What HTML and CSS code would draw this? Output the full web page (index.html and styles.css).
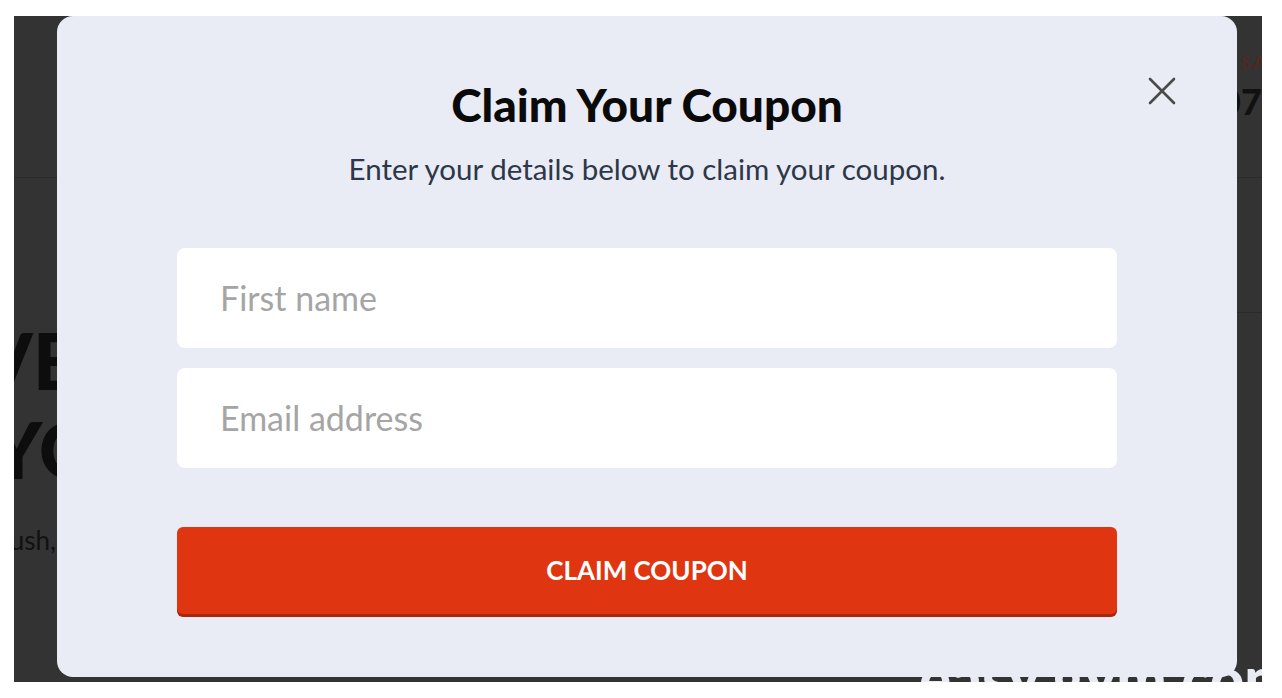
FILE: index.html
```html
<!DOCTYPE html>
<html lang="en">
<head>
    <meta charset="UTF-8">
    <meta name="viewport" content="width=device-width, initial-scale=1.0">
    <title>Claim Your Coupon</title>
    <link rel="stylesheet" href="styles.css">
</head>
<body>
    <div class="stage">
        <div class="site">
            <header class="site-header">
                <div class="contact">
                    <span class="contact-label">SALES</span>
                    <span class="contact-number">0700 123 456</span>
                </div>
            </header>
            <div class="site-body">
                <section class="hero">
                    <div class="hero-line">SAVE</div>
                    <div class="hero-line">ON YOUR</div>
                    <p class="hero-text">Plush, soft and made to last.</p>
                </section>
                <aside class="side-card"></aside>
            </div>
            <div class="site-footer">easy gym.com</div>
        </div>

        <div class="modal">
            <button class="modal-close" type="button" aria-label="Close">
                <svg width="32" height="32" viewBox="0 0 32 32">
                    <path d="M4 4 L28 28 M28 4 L4 28" stroke="#4a4a4a" stroke-width="2.6" stroke-linecap="round" fill="none"/>
                </svg>
            </button>
            <h1>Claim Your Coupon</h1>
            <p class="modal-sub">Enter your details below to claim your coupon.</p>
            <form class="coupon-form">
                <input type="text" placeholder="First name">
                <input type="email" placeholder="Email address">
                <button type="submit">CLAIM COUPON</button>
            </form>
        </div>
    </div>
</body>
</html>
```

FILE: styles.css
```css
body {
    margin: 0;
    padding: 16px 20px 16px 14px;
    background-color: #fff;
    font-family: Lato, "Open Sans", sans-serif;
}

.stage {
    position: relative;
    height: 666px;
    background-color: #333;
    overflow: hidden;
}

/* page behind the overlay */
.site {
    display: flex;
    flex-direction: column;
    height: 100%;
}

.site-header {
    display: flex;
    justify-content: flex-end;
    height: 161px;
    border-bottom: 1px solid #2b2b2b;
}

.contact {
    display: flex;
    flex-direction: column;
    align-items: flex-start;
    margin-right: -184px;
    padding-top: 36px;
    white-space: nowrap;
}

.contact-label {
    margin-left: 26px;
    font-size: 17px;
    letter-spacing: 3px;
    color: #5b2419;
}

.contact-number {
    margin: 6px 0 0 5px;
    font-size: 36px;
    font-weight: 900;
    color: #111;
}

.site-body {
    display: flex;
    flex: 1;
}

.hero {
    margin-left: -128px;
    padding-top: 138px;
    width: 600px;
}

.hero-line {
    font-size: 78px;
    font-weight: 900;
    line-height: 89px;
    color: #0d0d0d;
    white-space: nowrap;
}

.hero-line + .hero-line {
    margin-left: -34px;
}

.hero-text {
    margin: 30px 0 0 102px;
    font-size: 26px;
    color: #111;
    white-space: nowrap;
}

.side-card {
    flex: 1;
    margin-top: 134px;
    border-top: 1px solid #2b2b2b;
}

.site-footer {
    margin: -40px 0 0 905px;
    font-size: 60px;
    font-weight: 900;
    color: #e8ebf3;
    white-space: nowrap;
    height: 40px;
}

/* modal */
.modal {
    position: absolute;
    left: 43px;
    top: 0;
    width: 1180px;
    height: 661px;
    box-sizing: border-box;
    padding: 61px 120px 0;
    background-color: #e9ecf5;
    border-radius: 16px;
    text-align: center;
}

.modal-close {
    position: absolute;
    top: 59px;
    right: 59px;
    width: 32px;
    height: 32px;
    padding: 0;
    border: none;
    background: none;
    cursor: pointer;
}

.modal-close svg {
    display: block;
}

.modal h1 {
    margin: 0;
    font-size: 46px;
    font-weight: 900;
    line-height: 1.2;
    color: #0a0a0a;
}

.modal-sub {
    margin: 19px 0 0;
    font-size: 29.5px;
    line-height: 1.2;
    color: #2d3748;
}

.coupon-form {
    display: flex;
    flex-direction: column;
    gap: 20px;
    margin-top: 61px;
}

.coupon-form input {
    height: 100px;
    box-sizing: border-box;
    padding: 0 43px;
    border: none;
    border-radius: 8px;
    background-color: #fff;
    font-family: Lato, "Open Sans", sans-serif;
    font-size: 34px;
    color: #333;
}

.coupon-form input::placeholder {
    color: #a5a5a5;
}

.coupon-form button {
    height: 87px;
    margin-top: 39px;
    border: none;
    border-radius: 6px;
    background-color: #df3510;
    box-shadow: 0 3px 0 #a8260b;
    font-family: Lato, "Open Sans", sans-serif;
    font-size: 26px;
    font-weight: 700;
    color: #fff;
    cursor: pointer;
}
```
